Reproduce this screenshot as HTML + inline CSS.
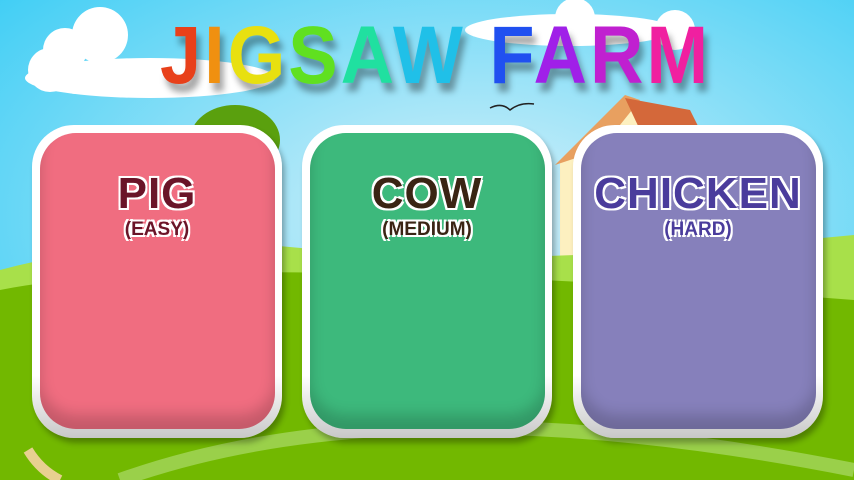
<!DOCTYPE html>
<html><head><meta charset="utf-8"><style>
body{margin:0;width:854px;height:480px;overflow:hidden;position:relative;font-family:"Liberation Sans",sans-serif}
svg.bg{position:absolute;left:0;top:0}
.card{position:absolute;top:125px;width:250px;height:313px;border-radius:42px;background:linear-gradient(#fff 80%,#c8c8c8);box-shadow:3px 5px 6px rgba(0,0,0,.3)}
.in{position:absolute;left:8px;top:8px;right:7px;bottom:9px;border-radius:36px;box-shadow:inset 0 -14px 14px rgba(0,0,0,.18)}
.t{position:absolute;left:0;right:0;text-align:center;font-weight:bold}
.t1{top:44px;font-size:44px;letter-spacing:1px;text-shadow:2px 2px 0 #fff,-2px -2px 0 #fff,2px -2px 0 #fff,-2px 2px 0 #fff}
.t2{top:94px;font-size:19px;text-shadow:2px 2px 0 #fff,-2px -2px 0 #fff,2px -2px 0 #fff,-2px 2px 0 #fff}
.title{position:absolute;top:8px;left:160px;width:540px;font-size:74px;font-weight:bold;letter-spacing:3px;text-shadow:4px 8px 6px rgba(0,0,0,.35);white-space:nowrap;transform:scaleY(1.1);transform-origin:top left}
</style></head><body>
<svg class="bg" width="854" height="480">
<defs><radialGradient id="sk" cx="0.55" cy="0.45" r="0.8"><stop offset="0" stop-color="#d8f1fa"/><stop offset="1" stop-color="#2fcaf4"/></radialGradient></defs>
<rect width="854" height="480" fill="url(#sk)"/>
<g fill="#fff"><ellipse cx="150" cy="78" rx="125" ry="20"/><circle cx="65" cy="50" r="22"/><circle cx="50" cy="70" r="22"/><circle cx="100" cy="35" r="28"/><circle cx="75" cy="80" r="14"/><ellipse cx="570" cy="30" rx="105" ry="16"/><circle cx="575" cy="18" r="20"/><circle cx="675" cy="30" r="20"/></g>
<ellipse cx="235" cy="140" rx="45" ry="35" fill="#5aa00e"/>
<polygon points="560,160 625,98 700,130 700,300 560,300" fill="#fdf0c0"/>
<polygon points="555,165 625,95 640,100 600,150" fill="#e8a060"/>
<polygon points="625,98 690,110 700,130 640,130" fill="#d4683a"/>
<path d="M0,270 Q150,230 320,250 T854,235 L854,480 L0,480Z" fill="#a8e04a"/>
<path d="M0,290 Q200,250 854,300 L854,480 L0,480Z" fill="#72b800"/>
<path d="M120,480 Q400,380 854,470" stroke="#9ad04a" stroke-width="14" fill="none"/>
<path d="M28,450 Q40,470 60,480" stroke="#e8d090" stroke-width="10" fill="none"/>
<path d="M490,108 q12,-6 20,2 q10,-8 24,-6" stroke="#222" stroke-width="1.5" fill="none"/>
</svg>
<div class="title"><span style="color:#e8401a">J</span><span style="color:#f09010">I</span><span style="color:#e8e010">G</span><span style="color:#60e020">S</span><span style="color:#20e0a0">A</span><span style="color:#20c0e8">W</span> <span style="color:#2050f0">F</span><span style="color:#a020e8">A</span><span style="color:#c020d0">R</span><span style="color:#f020a0">M</span></div>
<div class="card" style="left:32px"><div class="in" style="background:#f06d80"></div><div class="t t1" style="color:#6a1428">PIG</div><div class="t t2" style="color:#6a1428">(EASY)</div></div>
<div class="card" style="left:302px"><div class="in" style="background:#3db97c"></div><div class="t t1" style="color:#3a2414">COW</div><div class="t t2" style="color:#3a2414">(MEDIUM)</div></div>
<div class="card" style="left:573px"><div class="in" style="background:#8680bb"></div><div class="t t1" style="color:#4a3c9c">CHICKEN</div><div class="t t2" style="color:#4a3c9c">(HARD)</div></div>
</body></html>
